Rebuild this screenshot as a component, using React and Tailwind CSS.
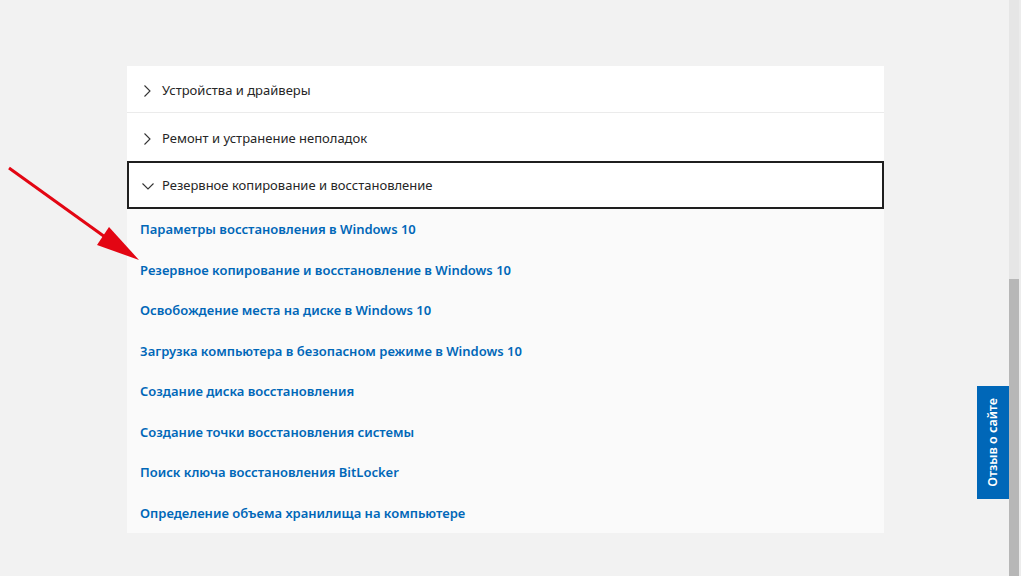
import React from "react";

const font = { fontFamily: '"Noto Sans", "Open Sans", sans-serif' };

function ChevronRight() {
  return (
    <svg width="14" height="16" viewBox="0 0 14 16" className="shrink-0">
      <path d="M4.5 2.5 L10 8 L4.5 13.5" fill="none" stroke="#333" strokeWidth="1.1" />
    </svg>
  );
}
function ChevronDown() {
  return (
    <svg width="16" height="16" viewBox="0 0 16 16" className="shrink-0">
      <path d="M2.5 5.5 L8 11 L13.5 5.5" fill="none" stroke="#333" strokeWidth="1.1" />
    </svg>
  );
}

const links = [
  "Параметры восстановления в Windows 10",
  "Резервное копирование и восстановление в Windows 10",
  "Освобождение места на диске в Windows 10",
  "Загрузка компьютера в безопасном режиме в Windows 10",
  "Создание диска восстановления",
  "Создание точки восстановления системы",
  "Поиск ключа восстановления BitLocker",
  "Определение объема хранилища на компьютере",
];

export default function App() {
  return (
    <div className="w-[1024px] h-[576px] bg-[#f2f2f2] relative overflow-hidden flex" style={font}>
      <div className="flex-1 pt-[66px] pl-[127px]">
        <div className="w-[757px] flex flex-col">
          <div className="h-[47px] bg-white flex items-center pl-[13px] pt-[3px] border-b border-[#ebebeb]">
            <div className="flex items-center gap-[8px]">
              <ChevronRight />
              <span className="text-[13px] text-[#262626]">Устройства и драйверы</span>
            </div>
          </div>
          <div className="h-[48px] bg-white flex items-center pl-[13px] pt-[3px]">
            <div className="flex items-center gap-[8px]">
              <ChevronRight />
              <span className="text-[13px] text-[#262626]">Ремонт и устранение неполадок</span>
            </div>
          </div>
          <div className="h-[48px] bg-white flex items-center pl-[11px] pt-[2px] border-2 border-[#1f1f1f]">
            <div className="flex items-center gap-[6px]">
              <ChevronDown />
              <span className="text-[13px] text-[#262626]">Резервное копирование и восстановление</span>
            </div>
          </div>
          <div className="bg-[#fafafa] flex flex-col">
            {links.map((l) => (
              <div key={l} className="h-[40.5px] flex items-center pl-[13px] pt-[1px]">
                <span className="text-[13px] font-semibold text-[#0067b8]">{l}</span>
              </div>
            ))}
          </div>
        </div>
      </div>
      <div className="w-[15px] h-full flex">
        <div className="w-[10px] h-full flex flex-col">
          <div className="h-[279px] bg-[#e6e6e6]"></div>
          <div className="flex-1 bg-[#b7b7b7]"></div>
        </div>
        <div className="w-[2px] bg-[#ececec]"></div>
        <div className="w-[3px] bg-white"></div>
      </div>
      <div className="absolute left-[977px] top-[386px] w-[32px] h-[113px] bg-[#0067b8] flex items-center justify-center">
        <span className="text-white text-[12.5px] font-semibold whitespace-nowrap -rotate-90">Отзыв о сайте</span>
      </div>
      <svg className="absolute left-0 top-0 pointer-events-none" width="200" height="300" viewBox="0 0 200 300">
        <line x1="9" y1="168" x2="112" y2="242" stroke="#e30613" strokeWidth="3" />
        <polygon points="139,260 97,245 109,227" fill="#e30613" />
      </svg>
    </div>
  );
}
